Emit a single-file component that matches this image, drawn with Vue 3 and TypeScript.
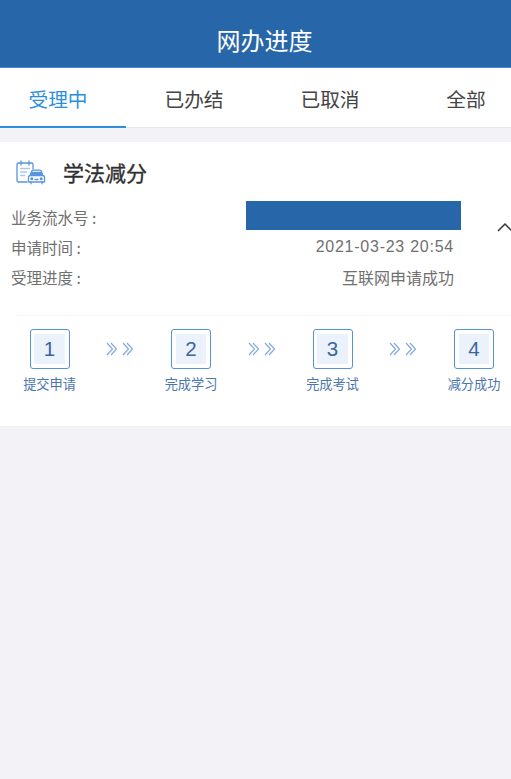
<script setup lang="ts">
const tabs = ['受理中', '已办结', '已取消', '全部']
const steps = ['提交申请', '完成学习', '完成考试', '减分成功']
</script>

<template>
  <div class="page">
    <header class="top">网办进度</header>
    <nav class="tabs">
      <div v-for="(t, i) in tabs" :key="t" class="tab" :class="{ on: i === 0 }">{{ t }}</div>
    </nav>
    <section class="card">
      <div class="title">
        <svg class="icon" viewBox="0 0 30 25" fill="none" stroke="#5a94de" stroke-width="1.3" stroke-linecap="round" stroke-linejoin="round">
          <path d="M11 22H2.500A1.500 1.500 0 0 1 1 20.500V4.500A1.500 1.500 0 0 1 2.500 3h13A1.500 1.500 0 0 1 17 4.500V9" />
          <path d="M5 1v4M13 1v4" />
          <path d="M4.500 8.500h9M4.500 12h6M4.500 15.500h4" stroke="#a9c6ee" />
          <path d="M14 16l1.500-4.500a2 2 0 0 1 1.900-1.300h6.200a2 2 0 0 1 1.900 1.300L27 16" />
          <path d="M16 12.500h9l1 3H15z" fill="#5a94de" />
          <path d="M14.500 15.500h12a2 2 0 0 1 2 2V22h-16v-4.500a2 2 0 0 1 2-2z" fill="#fff" />
          <path d="M15 22v1.800M26 22v1.800" />
          <circle cx="15.800" cy="18.800" r=".9" fill="#5a94de" />
          <circle cx="25.200" cy="18.800" r=".9" fill="#5a94de" />
          <path d="M19 19.500h3" />
        </svg>
        <span>学法减分</span>
      </div>
      <div class="rows">
        <div class="row"><span>业务流水号 :</span><span class="mask"></span></div>
        <div class="row"><span>申请时间 :</span><span class="val time">2021-03-23 20:54</span></div>
        <div class="row"><span>受理进度 :</span><span class="val">互联网申请成功</span></div>
        <svg class="chev" viewBox="0 0 16 10" fill="none" stroke="#333" stroke-width="1.500"><path d="M1 9l7-7 7 7" /></svg>
      </div>
      <div class="steps">
        <template v-for="(s, i) in steps" :key="s">
          <div class="step">
            <div class="box"><b>{{ i + 1 }}</b></div>
            <div class="lbl">{{ s }}</div>
          </div>
          <svg v-if="i < 3" class="arrows" viewBox="0 0 30 14" fill="none" stroke="#7faae4" stroke-width="1.200">
            <path d="M2 1L7.500 7 2 13M6 1L11.500 7 6 13M18 1L23.500 7 18 13M22 1L27.500 7 22 13" />
          </svg>
        </template>
      </div>
    </section>
  </div>
</template>

<style scoped>
.page {
  width: 511px;
  height: 779px;
  overflow: hidden;
  background: #f2f2f7;
  font-family: "Noto Sans CJK SC", "Liberation Sans", sans-serif;
}
.top {
  height: 42px;
  padding: 25px 0 0 18px;
  background: #2766a9;
  border-bottom: 1px solid #4a8ccb;
  color: #fff;
  font-size: 24px;
  line-height: 30px;
  text-align: center;
}
.tabs {
  display: grid;
  grid-template-columns: repeat(4, 136px);
  margin-left: -10px;
  width: 544px;
  height: 60px;
  box-sizing: border-box;
  background: #fff;
  border-bottom: 1px solid #e8e8ee;
}
.tab {
  position: relative;
  padding-top: 17px;
  font-size: 19.700px;
  line-height: 28px;
  text-align: center;
  color: #444;
}
.tab.on {
  color: #2a90dc;
}
.tab.on::after {
  content: "";
  position: absolute;
  left: 10px;
  right: 0;
  bottom: -1px;
  height: 2px;
  background: #2a90dc;
}
.card {
  margin-top: 14px;
  height: 285px;
  box-sizing: border-box;
  padding-top: 16px;
  background: #fff;
  border-bottom: 1px solid #efeff3;
}
.title {
  display: flex;
  align-items: center;
  height: 28px;
  padding-left: 16px;
  font-size: 21px;
  font-weight: 400;
  -webkit-text-stroke: 0.35px #2f2f2f;
  color: #2f2f2f;
}
.icon {
  width: 30px;
  height: 25px;
  margin-right: 17px;
}
.rows {
  position: relative;
  margin-top: 16px;
  padding: 0 57px 0 11px;
}
.row {
  display: flex;
  justify-content: space-between;
  align-items: center;
  height: 30px;
  font-size: 15.500px;
  color: #707070;
}
.mask {
  align-self: flex-start;
  width: 215px;
  height: 29px;
  margin: -1px -7px 0 0;
  background: #2766a9;
}
.val {
  font-size: 16px;
  color: #707070;
}
.time {
  font-family: "Liberation Sans", sans-serif;
  letter-spacing: 0.750px;
}
.chev {
  position: absolute;
  top: 20px;
  right: -2px;
  width: 16px;
  height: 10px;
}
.steps {
  display: flex;
  justify-content: space-between;
  margin: 23px 0 0 15px;
  padding: 13px 10.500px 0 8px;
  border-top: 1px solid #f6f6f8;
}
.step {
  width: 53px;
  text-align: center;
}
.box {
  display: flex;
  width: 40px;
  height: 40px;
  box-sizing: border-box;
  margin: 0 auto;
  padding: 3.800px;
  border: 1.700px solid #5592d8;
  border-radius: 3px;
}
.box b {
  flex: 1;
  font-family: "Liberation Sans", sans-serif;
  font-size: 20.500px;
  font-weight: 400;
  line-height: 29px;
  background: #ebf2fc;
  color: #38659f;
}
.lbl {
  margin-top: 6px;
  font-size: 13.200px;
  line-height: 18px;
  white-space: nowrap;
  color: #4a76ad;
}
.arrows {
  width: 30px;
  height: 14px;
  margin-top: 13px;
}
</style>

<style>
html, body { margin: 0; background: #f2f2f7; }
</style>
